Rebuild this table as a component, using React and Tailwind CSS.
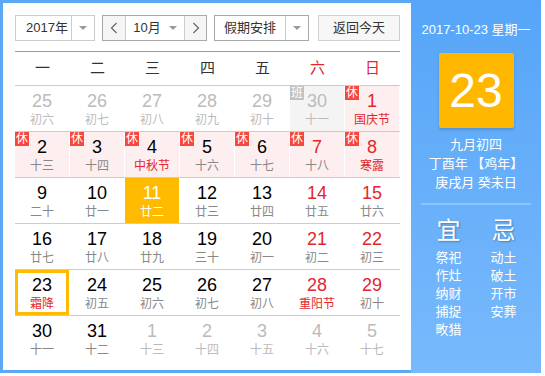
import React from 'react';

const weekdays = ['一', '二', '三', '四', '五', '六', '日'];

// d: day, l: lunar text, o: other month, red: red number, lr: red lunar, b: badge, sel, today
const rows = [
  [
    { d: 25, l: '初六', o: true },
    { d: 26, l: '初七', o: true },
    { d: 27, l: '初八', o: true },
    { d: 28, l: '初九', o: true },
    { d: 29, l: '初十', o: true },
    { d: 30, l: '十一', o: true, b: '班' },
    { d: 1, l: '国庆节', red: true, lr: true, b: '休' },
  ],
  [
    { d: 2, l: '十三', b: '休' },
    { d: 3, l: '十四', b: '休' },
    { d: 4, l: '中秋节', lr: true, b: '休' },
    { d: 5, l: '十六', b: '休' },
    { d: 6, l: '十七', b: '休' },
    { d: 7, l: '十八', red: true, b: '休' },
    { d: 8, l: '寒露', red: true, lr: true, b: '休' },
  ],
  [
    { d: 9, l: '二十' },
    { d: 10, l: '廿一' },
    { d: 11, l: '廿二', sel: true },
    { d: 12, l: '廿三' },
    { d: 13, l: '廿四' },
    { d: 14, l: '廿五', red: true },
    { d: 15, l: '廿六', red: true },
  ],
  [
    { d: 16, l: '廿七' },
    { d: 17, l: '廿八' },
    { d: 18, l: '廿九' },
    { d: 19, l: '三十' },
    { d: 20, l: '初一' },
    { d: 21, l: '初二', red: true },
    { d: 22, l: '初三', red: true },
  ],
  [
    { d: 23, l: '霜降', lr: true, today: true },
    { d: 24, l: '初五' },
    { d: 25, l: '初六' },
    { d: 26, l: '初七' },
    { d: 27, l: '初八' },
    { d: 28, l: '重阳节', red: true, lr: true },
    { d: 29, l: '初十', red: true },
  ],
  [
    { d: 30, l: '十一' },
    { d: 31, l: '十二' },
    { d: 1, l: '十三', o: true },
    { d: 2, l: '十四', o: true },
    { d: 3, l: '十五', o: true },
    { d: 4, l: '十六', o: true },
    { d: 5, l: '十七', o: true },
  ],
];

const yi = ['祭祀', '作灶', '纳财', '捕捉', '畋猎'];
const ji = ['动土', '破土', '开市', '安葬'];

const Caret = () => (
  <span className="inline-block w-0 h-0 border-x-[4px] border-x-transparent border-t-[4px] border-t-[#999]" />
);

const Chevron = ({ dir }) => (
  <svg width="8" height="12" viewBox="0 0 8 12">
    <polyline
      points={dir === 'left' ? '6.5,1 1.5,6 6.5,11' : '1.5,1 6.5,6 1.5,11'}
      fill="none"
      stroke="#666"
      strokeWidth="1.2"
    />
  </svg>
);

const DayCell = ({ c }) => {
  let bg = 'bg-white';
  if (c.sel) bg = 'bg-[#ffbb00]';
  else if (c.b === '班') bg = 'bg-[#f4f4f4]';
  else if (c.b === '休') bg = 'bg-[#fdefef]';

  let numColor = 'text-black';
  let lunarColor = 'text-[#888]';
  if (c.o) {
    numColor = 'text-[#bbb]';
    lunarColor = 'text-[#bbb]';
  } else if (c.sel) {
    numColor = 'text-white';
    lunarColor = 'text-white';
  } else {
    if (c.red) numColor = 'text-[#e3262e]';
    if (c.lr) lunarColor = 'text-[#e3262e]';
  }

  return (
    <div className={`relative h-full border-r border-white ${bg}`}>
      {c.today && (
        <div className="absolute inset-0 border-[3px] border-[#ffbb00]" />
      )}
      {c.b && (
        <span
          className={`absolute left-0 top-0 w-[14px] h-[14px] flex items-center justify-center text-[12px] leading-none text-white ${
            c.b === '休' ? 'bg-[#f5473b]' : 'bg-[#c2c2c2]'
          }`}
        >
          {c.b}
        </span>
      )}
      <div className="flex flex-col items-center pt-[5px]">
        <span className={`text-[18px] leading-[20px] ${numColor}`}>{c.d}</span>
        <span className={`text-[12px] leading-[18px] ${lunarColor}`}>{c.l}</span>
      </div>
    </div>
  );
};

export default function App() {
  return (
    <div className="w-[545px] h-[376px] bg-white font-['Liberation_Sans','Noto_Sans_CJK_SC',sans-serif]">
      <div className="flex w-[541px] h-[373px]">
        {/* Left: month grid */}
        <div className="w-[411px] h-full border-l-[3px] border-t-[3px] border-b-[3px] border-[#5ba8f5] bg-white pl-[12px] pr-[11px] pt-[12px]">
          <div className="flex h-[26px] text-[13px] text-[#333]">
            <div className="flex w-[80px] border border-[#ccc]">
              <div className="w-[55px] flex items-center pl-[10px]">2017年</div>
              <div className="flex-1 flex items-center justify-center border-l border-[#ccc]">
                <Caret />
              </div>
            </div>
            <div className="flex w-[105px] ml-[7px] border border-[#a8a8a8]">
              <div className="w-[23px] flex items-center justify-center bg-[#f5f5f5] border-r border-[#ccc]">
                <Chevron dir="left" />
              </div>
              <div className="flex-1 flex items-center justify-center gap-[8px]">
                <span>10月</span>
                <Caret />
              </div>
              <div className="w-[22px] flex items-center justify-center bg-[#f5f5f5] border-l border-[#ccc]">
                <Chevron dir="right" />
              </div>
            </div>
            <div className="flex w-[95px] ml-[7px] border border-[#a8a8a8]">
              <div className="w-[70px] flex items-center justify-center">假期安排</div>
              <div className="flex-1 flex items-center justify-center border-l border-[#ccc]">
                <Caret />
              </div>
            </div>
            <div className="w-[82px] ml-[9px] flex items-center justify-center border border-[#d0d0d0] bg-[#f7f7f7]">
              返回今天
            </div>
          </div>

          <div className="mt-[10px] h-[1px] bg-[#5ba8f5]" />

          <div className="grid grid-cols-7 h-[34px] border-b border-[#ccc] text-[15px]">
            {weekdays.map((w, i) => (
              <div
                key={w}
                className={`flex items-center justify-center ${i >= 5 ? 'text-[#e3262e]' : 'text-[#333]'}`}
              >
                {w}
              </div>
            ))}
          </div>

          {rows.map((row, ri) => (
            <div
              key={ri}
              className={`grid grid-cols-7 h-[46px] ${ri < rows.length - 1 ? 'border-b border-[#ccc]' : ''}`}
            >
              {row.map((c, ci) => (
                <DayCell key={ci} c={c} />
              ))}
            </div>
          ))}
        </div>

        {/* Right: today detail */}
        <div className="w-[130px] h-full bg-gradient-to-b from-[#56a5f8] to-[#78b9fc] flex flex-col items-center text-white">
          <div className="mt-[21px] text-[13px] leading-[18px]">2017-10-23 星期一</div>
          <div className="mt-[14px] w-[75px] h-[75px] rounded-[2px] bg-[#ffb700] shadow-[0_2px_3px_rgba(0,0,0,0.15)] flex items-center justify-center text-[48px] leading-none">
            23
          </div>
          <div className="mt-[7px] text-[13px] leading-[19px] text-center">
            <div>九月初四</div>
            <div>丁酉年 【鸡年】</div>
            <div>庚戌月 癸未日</div>
          </div>
          <div className="mt-[11px] w-[110px] h-[2px] bg-[#8dc4fb]" />
          <div className="flex w-[110px] mt-[11px]">
            <div className="w-[55px] flex flex-col items-center">
              <div className="text-[24px] leading-[30px] [text-shadow:1px_1px_2px_rgba(0,0,0,0.3)]">宜</div>
              <div className="mt-[3px] text-[13px] leading-[18px] flex flex-col items-center">
                {yi.map((t) => (
                  <span key={t}>{t}</span>
                ))}
              </div>
            </div>
            <div className="w-[55px] flex flex-col items-center">
              <div className="text-[24px] leading-[30px] [text-shadow:1px_1px_2px_rgba(0,0,0,0.3)]">忌</div>
              <div className="mt-[3px] text-[13px] leading-[18px] flex flex-col items-center">
                {ji.map((t) => (
                  <span key={t}>{t}</span>
                ))}
              </div>
            </div>
          </div>
        </div>
      </div>
    </div>
  );
}
